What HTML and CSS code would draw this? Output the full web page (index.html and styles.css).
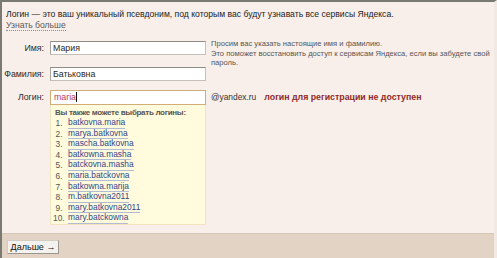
FILE: index.html
```html
<!DOCTYPE html>
<html lang="ru">
<head>
<meta charset="utf-8">
<title>Регистрация</title>
<link rel="stylesheet" href="styles.css">
</head>
<body>
<div class="page">
  <div class="main">
    <div class="intro">
      <div>Логин — это ваш уникальный псевдоним, под которым вас будут узнавать все сервисы Яндекса.</div>
      <a class="more" href="#">Узнать больше</a>
    </div>
    <div class="form">
      <label class="lbl r1">Имя:</label>
      <div class="field r1"><input class="inp" type="text" value="Мария"></div>
      <div class="hint"><div>Просим вас указать настоящие имя и фамилию.</div><div>Это поможет восстановить доступ к сервисам Яндекса, если вы забудете свой</div><div>пароль.</div></div>

      <label class="lbl r2">Фамилия:</label>
      <div class="field r2"><input class="inp" type="text" value="Батьковна"></div>

      <label class="lbl r3">Логин:</label>
      <div class="field r3">
        <div class="inp login">maria<span class="caret"></span></div>
        <div class="suggest">
          <div class="sg-title">Вы также можете выбрать логины:</div>
          <ol class="sg-list">
            <li><a href="#">batkovna.maria</a></li>
            <li><a href="#">marya.batkovna</a></li>
            <li><a href="#">mascha.batkovna</a></li>
            <li><a href="#">batkowna.masha</a></li>
            <li><a href="#">batckovna.masha</a></li>
            <li><a href="#">maria.batckovna</a></li>
            <li><a href="#">batkowna.marija</a></li>
            <li><a href="#">m.batkovna2011</a></li>
            <li><a href="#">mary.batkovna2011</a></li>
            <li><a href="#">mary.batckowna</a></li>
          </ol>
        </div>
      </div>
      <div class="domain r3"><span class="at">@yandex.ru</span><span class="err">логин для регистрации не доступен</span></div>
    </div>
  </div>
  <div class="footer">
    <button class="btn" type="button">Дальше →</button>
  </div>
</div>
</body>
</html>
```

FILE: styles.css
```css
* { box-sizing: border-box; }
html, body { margin: 0; padding: 0; }
body {
  width: 497px;
  height: 258px;
  overflow: hidden;
  font-family: "Liberation Sans", Arial, sans-serif;
  font-size: 8.7px;
  color: #222;
  background: #f8efea;
}
.page {
  width: 497px;
  height: 258px;
  border-top: 2px solid #7a7a72;
  border-left: 2px solid #7a7a72;
  border-right: 3px solid #f1e9e2;
  display: flex;
  flex-direction: column;
}
.main {
  height: 231px;
  padding: 7px 0 0 4px;
}
.intro {
  font-size: 8.6px;
  line-height: 11px;
}
.more {
  color: #5a5a5a;
  text-decoration: none;
  border-bottom: 1px dotted #8c8c8c;
}
.form {
  display: grid;
  grid-template-columns: 42px 156px 1fr;
  column-gap: 6px;
  grid-template-rows: 14px 14px auto;
  row-gap: 12px;
  margin-top: 10px;
  margin-left: -4px;
}
.r1 { grid-row: 1; }
.r2 { grid-row: 2; }
.r3 { grid-row: 3; }
.form .r3 { margin-top: -3px; }
.lbl {
  grid-column: 1;
  text-align: right;
  font-size: 8.8px;
  line-height: 14px;
  color: #2a2a2a;
}
.form .lbl.r3 { line-height: 15px; }
.field { grid-column: 2; }
.inp {
  display: block;
  width: 156px;
  height: 14px;
  margin: 0;
  padding: 0 2px;
  border: 1px solid #c4c0b8;
  border-top-color: #8f8c85;
  border-left-color: #a9a59e;
  background: #fff;
  font-family: inherit;
  font-size: 8.8px;
  line-height: 12px;
  color: #2a2a2a;
  outline: none;
}
.login {
  height: 15px;
  line-height: 13px;
  border: 1px solid #d2ad78;
  color: #b9405e;
  padding-left: 3px;
}
.caret {
  display: inline-block;
  width: 1px;
  height: 10px;
  background: #111;
  vertical-align: -2px;
}
.hint {
  grid-column: 3;
  grid-row: 1 / span 2;
  font-size: 7.6px;
  line-height: 9.5px;
  color: #555;
  margin-top: -2px;
  margin-left: -1px;
  white-space: nowrap;
}
.domain {
  grid-column: 3;
  line-height: 15px;
  margin-left: -1px;
  color: #333;
  white-space: nowrap;
}
.at { font-size: 8.4px; }
.err {
  margin-left: 8px;
  font-size: 8.8px;
  font-weight: bold;
  color: #8e2b2b;
}
.suggest {
  width: 156px;
  height: 120px;
  background: #fffbdc;
  border: 1px solid #efe5bf;
  border-top: 0;
  padding: 3px 0 0 2px;
}
.sg-title {
  font-weight: bold;
  font-size: 8px;
  letter-spacing: -0.3px;
  color: #555;
  line-height: 10px;
  margin-left: 2px;
}
.sg-list {
  margin: 0;
  padding: 0;
  list-style: none;
  counter-reset: sg;
  font-size: 8.4px;
  line-height: 10.6px;
  color: #555;
}
.sg-list li {
  counter-increment: sg;
  display: flex;
}
.sg-list li::before {
  content: counter(sg) ".";
  width: 9.5px;
  margin-right: 5.5px;
  text-align: right;
  flex: none;
}
.sg-list a {
  color: #33448c;
  text-decoration: none;
  border-bottom: 1px solid #b3bbd4;
  align-self: flex-start;
  line-height: 9.5px;
}
.footer {
  flex: 1;
  background: #e2d3c4;
  border-top: 1px solid #d7c7b7;
  padding: 6px 0 0 5px;
}
.btn {
  display: block;
  width: 52px;
  height: 14px;
  padding: 0;
  font-family: inherit;
  font-size: 9px;
  font-weight: normal;
  line-height: 12px;
  color: #111;
  background: #f4f2ee;
  border: 1px solid #d2ccc2;
  border-right-color: #9b968e;
  border-bottom-color: #9b968e;
}
```
